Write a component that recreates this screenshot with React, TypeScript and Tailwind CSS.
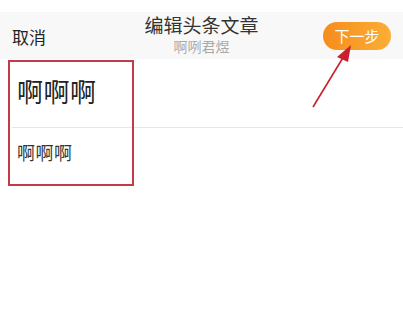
export default function App() {
  const cjk = { fontFamily: '"Noto Sans CJK SC", "Noto Sans", sans-serif' };

  return (
    <div className="relative w-[403px] h-[321px] bg-white overflow-hidden" style={cjk}>
      {/* Status strip */}
      <div className="h-[12px] bg-white" />

      {/* Header */}
      <div className="h-[47px] bg-[#f8f8f8] grid grid-cols-[1fr_auto_1fr] items-center px-[12px]">
        <span className="text-[17px] text-[#222] leading-none mt-[2px] justify-self-start">取消</span>
        <div className="flex flex-col items-center self-start pt-[1px]">
          <span className="text-[19px] text-[#333] leading-[24px]">编辑头条文章</span>
          <span className="text-[14px] text-[#aaa] leading-[18px]">啊咧君煜</span>
        </div>
        <button className="justify-self-end w-[68px] h-[28px] rounded-full bg-gradient-to-r from-[#f68c1c] to-[#fbae36] text-white text-[15px] leading-none">
          下一步
        </button>
      </div>

      {/* Title */}
      <div className="h-[68px] flex items-center pl-[17px] pb-[5px]">
        <span className="text-[26px] text-[#222] leading-none tracking-[0.5px]">啊啊啊</span>
      </div>
      <div className="ml-[12px] h-px bg-[#e6e6e6]" />

      {/* Body */}
      <div className="pt-[13px] pl-[17px]">
        <span className="text-[18px] text-[#333] leading-none tracking-[0.5px]">啊啊啊</span>
      </div>

      {/* Annotation box */}
      <div className="absolute left-[8px] top-[60px] w-[126px] h-[126px] border-2 border-[#c33a4a]" />

      {/* Annotation arrow */}
      <svg className="absolute left-0 top-0" width="403" height="321" viewBox="0 0 403 321">
        <line x1="313" y1="107" x2="344" y2="56" stroke="#c8202f" strokeWidth="1.6" />
        <polygon points="351,45 337,57 348,62" fill="#c8202f" />
      </svg>
    </div>
  );
}
